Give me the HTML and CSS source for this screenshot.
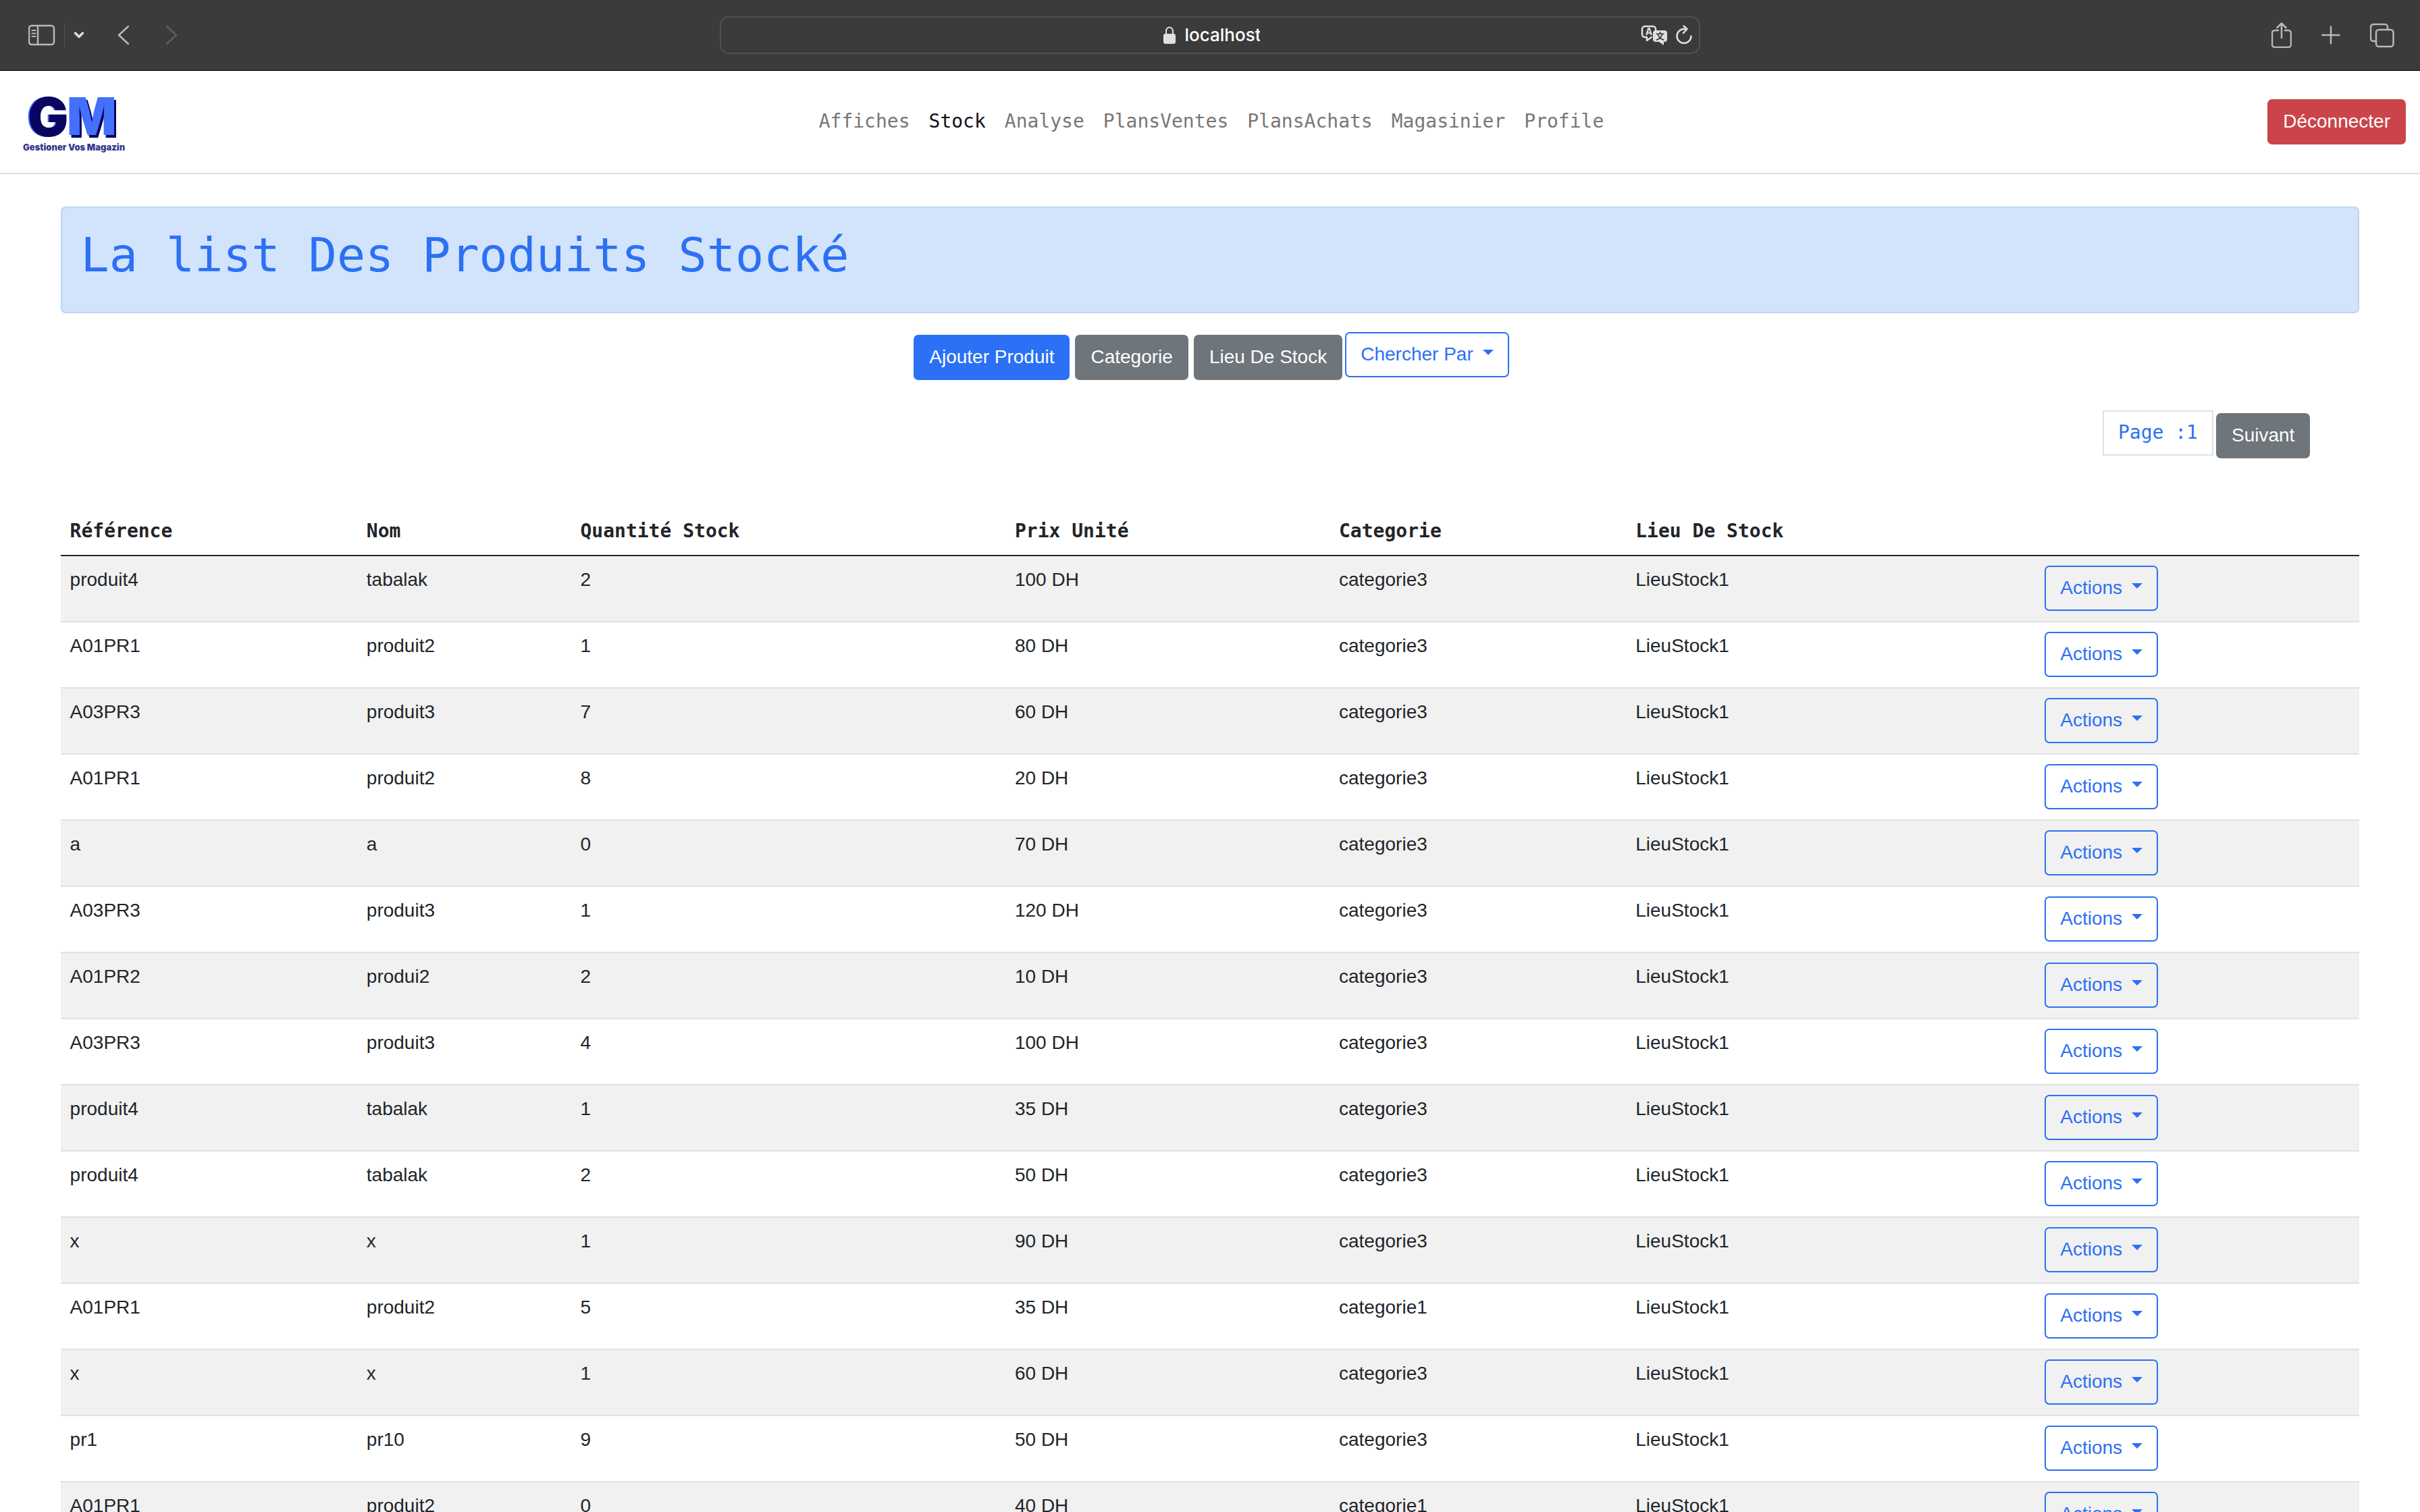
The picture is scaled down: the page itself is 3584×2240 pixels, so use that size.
FILE: index.html
```html
<!DOCTYPE html>
<html lang="fr">
<head>
<meta charset="utf-8">
<meta name="viewport" content="width=device-width, initial-scale=1">
<title>Gestioner Vos Magazin - Stock</title>
<link rel="stylesheet" href="styles.css">
</head>
<body>
<div class="browser-bar">
  <div class="bar-left">
    <button class="icon-btn" type="button" aria-label="Barre latérale"><svg width="40" height="32" viewBox="0 0 40 32"><rect x="1" y="2" width="37" height="28" rx="4"/><path d="M14 2v28"/><path class="thin" d="M5.500 9h5M5.500 13.500h5M5.500 18h5"/></svg></button>
    <span class="bar-sep"></span>
    <button class="icon-btn bright chevron" type="button" aria-label="Groupes d'onglets"><svg width="16" height="12" viewBox="0 0 16 12"><path class="bold" d="M2.500 3l5.500 5.500L13.500 3"/></svg></button>
    <button class="icon-btn back" type="button" aria-label="Précédent"><svg width="20" height="32" viewBox="0 0 20 32"><path d="M17 3L3 16l14 13"/></svg></button>
    <button class="icon-btn forward" type="button" aria-label="Suivant" disabled><svg width="20" height="32" viewBox="0 0 20 32"><path d="M3 3l14 13L3 29"/></svg></button>
  </div>
  <div class="address">
    <div class="address-main">
      <svg class="lock" width="18" height="26" viewBox="0 0 18 26"><path d="M4 12V7a5 5.500 0 0 1 10 0v5" fill="none" stroke="#e0e0e0" stroke-width="2"/><rect x="0" y="11" width="18" height="15" rx="3" fill="#e0e0e0"/></svg>
      <input class="address-input" type="text" value="localhost" aria-label="Adresse">
    </div>
    <div class="address-tools">
      <button class="icon-btn bright" type="button" aria-label="Traduire"><svg width="40" height="30" viewBox="0 0 40 30"><path d="M16 18l-7 5v-5H6a4 4 0 0 1-4-4V6a4 4 0 0 1 4-4h12a4 4 0 0 1 4 4v2"/><text x="12" y="15" class="glyph glyph-a">A</text><path class="solid" d="M22 8h13a4 4 0 0 1 4 4v9a4 4 0 0 1-4 4h-1v5l-7-5h-5a4 4 0 0 1-4-4v-9a4 4 0 0 1 4-4z"/><text x="28.500" y="21" class="glyph glyph-b">文</text></svg></button>
      <button class="icon-btn bright" type="button" aria-label="Recharger"><svg width="24" height="30" viewBox="0 0 24 30"><path d="M22.500 16.500a10.500 10.500 0 1 1-10.500-10.500h4"/><path d="M11.500 1.500l5 4.500-5.500 6"/></svg></button>
    </div>
  </div>
  <div class="bar-right">
    <button class="icon-btn" type="button" aria-label="Partager"><svg width="30" height="38" viewBox="0 0 30 38"><path d="M10 12H5a4 4 0 0 0-4 4v17a4 4 0 0 0 4 4h20a4 4 0 0 0 4-4V16a4 4 0 0 0-4-4h-5M15 23V2M8.500 8L15 1.500 21.500 8"/></svg></button>
    <button class="icon-btn" type="button" aria-label="Nouvel onglet"><svg width="28" height="38" viewBox="0 0 28 38"><path d="M14 6.500v25M1.500 19h25"/></svg></button>
    <button class="icon-btn" type="button" aria-label="Onglets"><svg width="36" height="38" viewBox="0 0 36 38"><rect x="9" y="11" width="25.500" height="25" rx="4"/><path d="M9 28H5a4 4 0 0 1-4-4V7a4 4 0 0 1 4-4h17a4 4 0 0 1 4 4v4"/></svg></button>
  </div>
</div>

<header class="navbar">
  <a class="brand" href="#" aria-label="Gestioner Vos Magazin">
    <svg width="170" height="94" viewBox="0 0 170 94">
      <text class="logo-g" x="20" y="69">G</text>
      <text class="logo-m" x="78" y="67">M</text>
      <text class="logo-name" x="13" y="90">Gestioner Vos Magazin</text>
    </svg>
  </a>
  <nav class="nav-links">
    <a href="#">Affiches</a>
    <a class="active" href="#">Stock</a>
    <a href="#">Analyse</a>
    <a href="#">PlansVentes</a>
    <a href="#">PlansAchats</a>
    <a href="#">Magasinier</a>
    <a href="#">Profile</a>
  </nav>
  <button class="btn btn-danger" type="button">Déconnecter</button>
</header>

<main class="content">
  <div class="alert"><h1>La list Des Produits Stocké</h1></div>

  <div class="toolbar">
    <div class="toolbar-main">
      <button class="btn btn-primary" type="button">Ajouter Produit</button>
      <button class="btn btn-secondary" type="button">Categorie</button>
      <button class="btn btn-secondary" type="button">Lieu De Stock</button>
    </div>
    <button class="btn btn-outline" type="button">Chercher Par<span class="caret"></span></button>
  </div>

  <div class="pager">
    <span class="page-number">Page :1</span>
    <button class="btn btn-secondary" type="button">Suivant</button>
  </div>

  <table class="stock">
    <colgroup><col class="c-ref"><col class="c-nom"><col class="c-qte"><col class="c-prix"><col class="c-cat"><col class="c-lieu"><col class="c-act"></colgroup>
    <thead>
      <tr><th>Référence</th><th>Nom</th><th>Quantité Stock</th><th>Prix Unité</th><th>Categorie</th><th>Lieu De Stock</th><th></th></tr>
    </thead>
    <tbody>
      <tr><td>produit4</td><td>tabalak</td><td>2</td><td>100 DH</td><td>categorie3</td><td>LieuStock1</td><td><button class="btn btn-outline" type="button">Actions<span class="caret"></span></button></td></tr>
      <tr><td>A01PR1</td><td>produit2</td><td>1</td><td>80 DH</td><td>categorie3</td><td>LieuStock1</td><td><button class="btn btn-outline" type="button">Actions<span class="caret"></span></button></td></tr>
      <tr><td>A03PR3</td><td>produit3</td><td>7</td><td>60 DH</td><td>categorie3</td><td>LieuStock1</td><td><button class="btn btn-outline" type="button">Actions<span class="caret"></span></button></td></tr>
      <tr><td>A01PR1</td><td>produit2</td><td>8</td><td>20 DH</td><td>categorie3</td><td>LieuStock1</td><td><button class="btn btn-outline" type="button">Actions<span class="caret"></span></button></td></tr>
      <tr><td>a</td><td>a</td><td>0</td><td>70 DH</td><td>categorie3</td><td>LieuStock1</td><td><button class="btn btn-outline" type="button">Actions<span class="caret"></span></button></td></tr>
      <tr><td>A03PR3</td><td>produit3</td><td>1</td><td>120 DH</td><td>categorie3</td><td>LieuStock1</td><td><button class="btn btn-outline" type="button">Actions<span class="caret"></span></button></td></tr>
      <tr><td>A01PR2</td><td>produi2</td><td>2</td><td>10 DH</td><td>categorie3</td><td>LieuStock1</td><td><button class="btn btn-outline" type="button">Actions<span class="caret"></span></button></td></tr>
      <tr><td>A03PR3</td><td>produit3</td><td>4</td><td>100 DH</td><td>categorie3</td><td>LieuStock1</td><td><button class="btn btn-outline" type="button">Actions<span class="caret"></span></button></td></tr>
      <tr><td>produit4</td><td>tabalak</td><td>1</td><td>35 DH</td><td>categorie3</td><td>LieuStock1</td><td><button class="btn btn-outline" type="button">Actions<span class="caret"></span></button></td></tr>
      <tr><td>produit4</td><td>tabalak</td><td>2</td><td>50 DH</td><td>categorie3</td><td>LieuStock1</td><td><button class="btn btn-outline" type="button">Actions<span class="caret"></span></button></td></tr>
      <tr><td>x</td><td>x</td><td>1</td><td>90 DH</td><td>categorie3</td><td>LieuStock1</td><td><button class="btn btn-outline" type="button">Actions<span class="caret"></span></button></td></tr>
      <tr><td>A01PR1</td><td>produit2</td><td>5</td><td>35 DH</td><td>categorie1</td><td>LieuStock1</td><td><button class="btn btn-outline" type="button">Actions<span class="caret"></span></button></td></tr>
      <tr><td>x</td><td>x</td><td>1</td><td>60 DH</td><td>categorie3</td><td>LieuStock1</td><td><button class="btn btn-outline" type="button">Actions<span class="caret"></span></button></td></tr>
      <tr><td>pr1</td><td>pr10</td><td>9</td><td>50 DH</td><td>categorie3</td><td>LieuStock1</td><td><button class="btn btn-outline" type="button">Actions<span class="caret"></span></button></td></tr>
      <tr><td>A01PR1</td><td>produit2</td><td>0</td><td>40 DH</td><td>categorie1</td><td>LieuStock1</td><td><button class="btn btn-outline" type="button">Actions<span class="caret"></span></button></td></tr>
    </tbody>
  </table>
</main>
</body>
</html>
```
FILE: styles.css
```css
* {
  box-sizing: border-box;
}

:root {
  --blue: #2b70f5;
  --gray: #6e757b;
  --line: #e0e1e3;
  --mono: "DejaVu Sans Mono", "Liberation Mono", monospace;
  --sans: "Liberation Sans", Arial, sans-serif;
}

body {
  margin: 0;
  height: 100vh;
  overflow: hidden;
  background: #fff;
  color: #212529;
  font: 28px/42px var(--sans);
}

/* Browser toolbar */
.browser-bar {
  display: grid;
  grid-template-columns: 11fr 15fr 11fr;
  align-items: center;
  height: 105px;
  border-bottom: 1px solid #000;
  background: #3b3b3b;
}

.icon-btn {
  display: flex;
  padding: 0;
  border: 0;
  background: none;
  color: #b8b8b8;
}

.icon-btn svg,
.brand svg,
.lock {
  display: block;
}

.icon-btn svg {
  fill: none;
  stroke: currentColor;
  stroke-width: 2.5;
  stroke-linecap: round;
  stroke-linejoin: round;
}

.icon-btn .thin {
  stroke-width: 2;
}

.icon-btn .bold {
  stroke-width: 3.5;
}

.icon-btn .solid {
  fill: currentColor;
  stroke: none;
}

.icon-btn .glyph {
  stroke: none;
  text-anchor: middle;
  font-weight: 700;
}

.glyph-a {
  fill: currentColor;
  font-family: Inter, sans-serif;
  font-size: 14px;
}

.glyph-b {
  fill: #3b3b3b;
  font-family: "Noto Sans CJK SC", sans-serif;
  font-size: 13px;
}

.bright {
  color: #e0e0e0;
}

.icon-btn:disabled {
  color: #5e5e5e;
}

.bar-left {
  display: flex;
  align-items: center;
  padding-left: 42px;
}

.bar-sep {
  width: 1px;
  height: 36px;
  margin: 0 13px;
  background: #555;
}

.back {
  margin-left: 48px;
}

.forward {
  margin-left: 51px;
}

.address {
  display: grid;
  grid-template-columns: 1fr auto 1fr;
  align-items: center;
  height: 56px;
  padding-right: 10px;
  padding-left: 16px;
  border: 2px solid #515151;
  border-radius: 14px;
}

.address-main {
  display: flex;
  grid-column: 2;
  align-items: center;
  gap: 13px;
}

.address-input {
  width: 112px;
  padding: 0;
  border: 0;
  background: none;
  color: #fff;
  font: 500 26px/32px Inter, sans-serif;
}

.address-tools {
  display: flex;
  justify-content: flex-end;
  align-items: center;
  gap: 12px;
}

.bar-right {
  display: flex;
  justify-content: flex-end;
  align-items: center;
  gap: 44px;
  padding-right: 38px;
}

/* Site header */
.navbar {
  display: grid;
  grid-template-columns: 1fr auto 1fr;
  align-items: center;
  padding: 28px 21px 29px;
  border-bottom: 2px solid var(--line);
}

.navbar .btn {
  justify-self: end;
}

.nav-links {
  display: flex;
  gap: 28px;
  padding-left: 4px;
  font-family: var(--mono);
}

.nav-links a {
  color: #777;
  text-decoration: none;
}

.nav-links .active {
  color: #111;
}

.logo-g {
  fill: #0a0560;
  filter: drop-shadow(-2px 0 0 #4470fb);
  font: 900 80px Inter, sans-serif;
}

.logo-m {
  fill: #4470fb;
  filter: drop-shadow(3px 4px 0 #0a0560);
  font: 900 77px Inter, sans-serif;
}

.logo-name {
  fill: #35388c;
  font: 900 13px Inter, sans-serif;
}

/* Buttons */
.btn {
  height: 67px;
  padding: 0 21px 1px;
  border: 2px solid transparent;
  border-radius: 7px;
  color: #fff;
  font: 28px/42px var(--sans);
  white-space: nowrap;
}

.btn-primary {
  background: var(--blue);
  border-color: var(--blue);
}

.btn-secondary {
  background: var(--gray);
  border-color: var(--gray);
}

.btn-danger {
  background: #ca444a;
  border-color: #ca444a;
}

.btn-outline {
  background: none;
  border-color: var(--blue);
  color: var(--blue);
}

.caret {
  display: inline-block;
  margin-left: 14px;
  border: 8px solid transparent;
  border-top-color: currentColor;
  border-bottom: 0;
  vertical-align: 8px;
}

/* Page content */
.content {
  width: 95%;
  margin: 48px auto 0;
}

.alert {
  padding: 28px;
  border: 2px solid #bcd4f7;
  border-radius: 7px;
  background: #d2e3fc;
}

.alert h1 {
  margin: 0 0 14px;
  color: var(--blue);
  font: 400 70px/84px var(--mono);
}

.toolbar,
.pager {
  display: flex;
  gap: 4px;
}

.toolbar {
  justify-content: center;
  margin-top: 28px;
  padding-left: 4px;
}

.toolbar-main {
  display: flex;
  gap: 8px;
  padding-top: 4px;
}

.pager {
  justify-content: flex-end;
  margin: 45px 73px 73px 0;
}

.pager .btn {
  margin-top: 4px;
}

.page-number {
  height: 67px;
  padding: 10px 21px;
  border: 2px solid var(--line);
  color: var(--blue);
  font-family: var(--mono);
}

/* Stock table */
.stock {
  width: 100%;
  table-layout: fixed;
  border-spacing: 0;
}

.c-ref { width: 12.9%; }
.c-nom { width: 9.3%; }
.c-qte { width: 18.9%; }
.c-prix { width: 14.1%; }
.c-cat { width: 12.9%; }
.c-lieu { width: 17.8%; }
.c-act { width: 14.1%; }

.stock th,
.stock td {
  padding: 14px;
  text-align: left;
  vertical-align: top;
}

.stock th {
  border-bottom: 2px solid #212529;
  font-family: var(--mono);
  font-weight: 700;
}

.stock td {
  height: 98px;
  border-bottom: 2px solid var(--line);
}

.stock td .btn {
  display: block;
}

.stock tbody tr:nth-child(odd) {
  background: #f1f1f1;
}
```
